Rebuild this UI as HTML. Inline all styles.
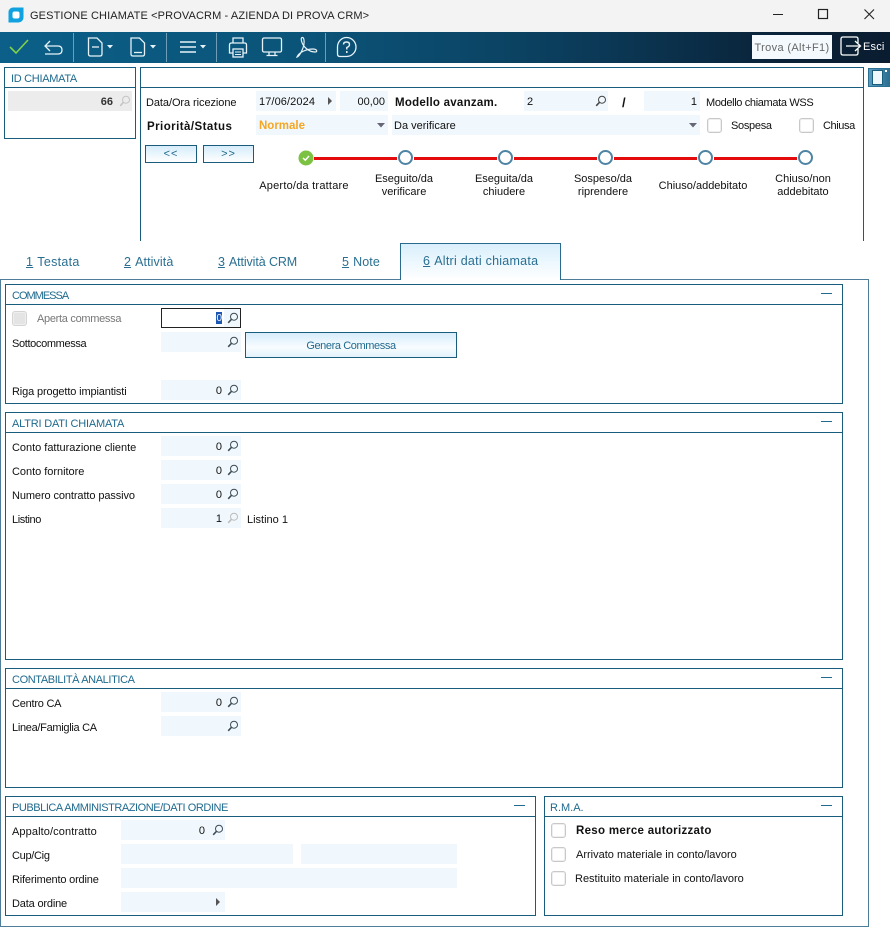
<!DOCTYPE html>
<html><head><meta charset="utf-8">
<style>
html,body{margin:0;padding:0;background:#fff}
#r{position:relative;width:890px;height:927px;overflow:hidden;background:#fff;font-family:"Liberation Sans","DejaVu Sans",sans-serif;font-size:11px;color:#111}
#r div,#r svg{position:absolute;box-sizing:border-box}
.t{white-space:nowrap;line-height:14px;letter-spacing:0}
.b{font-weight:bold}
.f{background:#f1f8fd}
.n{text-align:right;line-height:22px;white-space:nowrap}
.p{border:1px solid #1a5c7c;background:#fff}
.h{color:#1f6a8e;white-space:nowrap;line-height:14px}
.l{background:#1a5c7c;height:1px}
.c{width:15px;height:15px;border:1px solid #c8c8c8;border-radius:3px;background:#fff;box-shadow:inset 0 0 0 1px #efefef}
.m{width:11px;height:1px;background:#1f6a8e}
.st{text-align:center;line-height:13px;white-space:nowrap}
.tab{color:#2a6f92;font-size:12.5px;line-height:16px;white-space:nowrap;letter-spacing:.1px}
.tab u{margin-right:4px}
.nb{border:1px solid #1a5c7c;background:linear-gradient(#d6ecfa,#fff);color:#1f6a8e;text-align:center;line-height:16px;letter-spacing:1px}
.cc{width:15px;height:15px;border-radius:50%;border:2px solid #4d84a3;background:#fff}
.rl{height:3px;background:#e30b0b;top:157px}
</style></head><body>
<div id="r">
<svg width="0" height="0" style="position:absolute"><defs>
<g id="s"><circle cx="7" cy="4.700" r="3.500" fill="none" stroke="currentColor" stroke-width="1"/><path d="M4.500 7.300 L1.200 10.800" stroke="currentColor" stroke-width="1.500" fill="none"/></g>
</defs></svg>

<!-- title bar -->
<div style="left:0;top:0;width:890px;height:32px;background:#f3f3f3"></div>
<svg style="left:8px;top:7px" width="16" height="16"><path d="M5 0.500H15.500V10.500A5 5 0 0 1 10.500 15.500H0.500V5A4.500 4.500 0 0 1 5 0.500Z" fill="#10a2e0"/><rect x="4.500" y="4.500" width="7" height="7" rx="2" fill="#fff"/></svg>
<div class="t" style="left:30px;top:9px;color:#222;letter-spacing:.12px;font-size:11px">GESTIONE CHIAMATE &lt;PROVACRM - AZIENDA DI PROVA CRM&gt;</div>
<svg style="left:770px;top:5px" width="115" height="22" fill="none" stroke="#222" stroke-width="1"><path d="M3 9.500H13"/><rect x="48.500" y="4.500" width="9" height="9" stroke-width="1.200"/><path d="M94.500 4.500L104 14M104 4.500L94.500 14" stroke-width="1.100"/></svg>

<!-- toolbar -->
<div style="left:0;top:32px;width:890px;height:31px;background:linear-gradient(90deg,#0b5f88 0%,#0b5378 35%,#0b4566 55%,#0b3450 72%,#0a2238 88%,#0a1c30 100%)"></div>
<svg style="left:0;top:32px" width="360" height="31" fill="none" stroke="#e6f2f8" stroke-width="1.300">
<path d="M10 15L16 21L28 8" stroke="#7fd24a" stroke-width="1.600"/>
<path d="M50 9L45 14L50 19M45 14H58Q62 14 62 18Q62 22 58 22H45" stroke-width="1.300"/>
<path d="M73.500 1V30M166.500 1V30M216.500 1V30M325.500 1V30" stroke="#6f9db6" stroke-width="1"/>
<path d="M88.500 6H97L102 11V22Q102 24 100 24H90.500Q88.500 24 88.500 22Z"/><path d="M92 15H99"/>
<path d="M131 6H139.500L144.500 11V22Q144.500 24 142.500 24H133Q131 24 131 22Z"/><path d="M134 20.500H142"/>
<path d="M107 13L113 13L110 16.500Z M150 13L156 13L153 16.500Z M200 13L206 13L203 16.500Z" fill="#e6f2f8" stroke="none"/>
<path d="M180 10H196M180 15H196M180 20H196" stroke-width="1.500"/>
<path d="M233 11V6H243V11M233 21H229.500V13Q229.500 11 231.500 11H244.500Q246.500 11 246.500 13V21H243"/><rect x="233" y="17" width="10" height="8"/><path d="M235 20H241M235 22.500H241" stroke-width="1"/>
<rect x="262.500" y="6" width="19" height="14" rx="1.500"/><path d="M269 20V23M275 20V23M266.500 23.500H277.500"/>
<path d="M297 25C300 24 305 14 304 8C303.500 4 300.500 5 301.500 9C303 15 309 20 315 20C318 20 317 17 313 17C307 17 299 20 297 25Z" stroke-width="1.200"/>
<path d="M346.500 5.500A9.500 9.500 0 1 1 346.500 24.500H340Q337.500 24.500 337.500 22V15A9 9.500 0 0 1 346.500 5.500Z"/>
<path d="M343.500 12.500Q343.500 10 346.500 10Q349.500 10 349.500 12.500Q349.500 14.500 346.800 15.500V17.500" stroke-width="1.400"/><path d="M346.800 19V21" stroke-width="1.500"/>
</svg>
<div style="left:752px;top:35px;width:80px;height:24px;background:#f4f9fd;color:#666;line-height:26px;text-align:center;white-space:nowrap;letter-spacing:.35px">Trova (Alt+F1)</div>
<svg style="left:840px;top:36px" width="22" height="22" fill="none" stroke="#fff" stroke-width="1.300"><path d="M18 7V3Q18 1 16 1H3Q1 1 1 3V17Q1 19 3 19H16Q18 19 18 17V13"/><path d="M6 10H20M15 5L20.500 10L15 15"/></svg>
<div class="t" style="left:863px;top:40px;color:#fff;letter-spacing:.2px">Esci</div>

<!-- ID panel -->
<div class="p" style="left:4px;top:67px;width:132px;height:72px"></div>
<div class="l" style="left:4px;top:87px;width:132px"></div>
<div class="h" style="left:11px;top:72px;letter-spacing:-.3px">ID CHIAMATA</div>
<div style="left:8px;top:91px;width:124px;height:20px;background:#ececec"></div>
<div class="b n" style="left:8px;top:91px;width:105px;color:#333">66</div>
<svg style="left:119px;top:95px;color:#c4c4c4" width="12" height="12"><use href="#s"/></svg>

<!-- main header panel -->
<div style="left:140px;top:67px;width:724px;height:174px;border:1px solid #1a5c7c;border-bottom:0"></div>
<div class="l" style="left:140px;top:87px;width:724px"></div>
<div style="left:868px;top:68px;width:22px;height:19px;border:1px solid #2b6f92;background:linear-gradient(90deg,#5a9cc0,#2b6f92)"></div>
<div style="left:872px;top:70px;width:11px;height:15px;background:#eef7fc;border:1px solid #1a5c7c"></div>
<div style="left:885px;top:70px;width:2px;height:2px;background:#fff"></div>

<div class="t" style="left:146px;top:96px;letter-spacing:-.07px">Data/Ora ricezione</div>
<div class="f" style="left:256px;top:91px;width:80px;height:20px"></div>
<div class="t" style="left:259px;top:95px;letter-spacing:.1px">17/06/2024</div>
<svg style="left:327px;top:97px" width="6" height="8"><path d="M1 0L5 4L1 8Z" fill="#555"/></svg>
<div class="f n" style="left:340px;top:91px;width:48px;height:20px;padding-right:3px">00,00</div>
<div class="t b" style="left:395px;top:96px;font-size:11.500px;letter-spacing:.25px">Modello avanzam.</div>
<div class="f" style="left:524px;top:91px;width:84px;height:20px"></div>
<div class="t" style="left:527px;top:95px">2</div>
<svg style="left:595px;top:95px;color:#444" width="12" height="12"><use href="#s"/></svg>
<div class="t b" style="left:622px;top:96px;font-size:13px">/</div>
<div class="f n" style="left:644px;top:91px;width:56px;height:20px;padding-right:3px">1</div>
<div class="t" style="left:706px;top:96px;letter-spacing:-.35px">Modello chiamata WSS</div>

<div class="t b" style="left:147px;top:120px;font-size:11.500px;letter-spacing:.45px">Priorità/Status</div>
<div class="f" style="left:256px;top:115px;width:132px;height:20px"></div>
<div class="t b" style="left:259px;top:119px;color:#f5a623;font-size:11.500px">Normale</div>
<svg style="left:377px;top:123px" width="8" height="5"><path d="M0 0H8L4 4.500Z" fill="#667"/></svg>
<div class="f" style="left:392px;top:115px;width:308px;height:20px"></div>
<div class="t" style="left:394px;top:119px">Da verificare</div>
<svg style="left:689px;top:123px" width="8" height="5"><path d="M0 0H8L4 4.500Z" fill="#667"/></svg>
<div class="c" style="left:707px;top:118px"></div>
<div class="t" style="left:731px;top:119px;letter-spacing:-.3px">Sospesa</div>
<div class="c" style="left:799px;top:118px"></div>
<div class="t" style="left:823px;top:119px;letter-spacing:-.4px">Chiusa</div>

<div class="nb" style="left:145px;top:145px;width:52px;height:18px">&lt;&lt;</div>
<div class="nb" style="left:203px;top:145px;width:51px;height:18px">&gt;&gt;</div>

<!-- stepper -->
<div class="rl" style="left:314px;width:83px"></div>
<div class="rl" style="left:414px;width:83px"></div>
<div class="rl" style="left:514px;width:83px"></div>
<div class="rl" style="left:614px;width:83px"></div>
<div class="rl" style="left:714px;width:83px"></div>
<svg style="left:298px;top:150px" width="16" height="16"><circle cx="8" cy="8" r="7.500" fill="#7cc242"/><path d="M5 8L7.300 10.200L11 6" stroke="#fff" stroke-width="1.500" fill="none"/></svg>
<div class="cc" style="left:398px;top:150px"></div>
<div class="cc" style="left:498px;top:150px"></div>
<div class="cc" style="left:598px;top:150px"></div>
<div class="cc" style="left:698px;top:150px"></div>
<div class="cc" style="left:798px;top:150px"></div>
<div class="st" style="left:244px;top:180px;width:120px;letter-spacing:.22px">Aperto/da trattare</div>
<div class="st" style="left:344px;top:173px;width:120px">Eseguito/da<br>verificare</div>
<div class="st" style="left:444px;top:173px;width:120px">Eseguita/da<br>chiudere</div>
<div class="st" style="left:543px;top:173px;width:120px">Sospeso/da<br>riprendere</div>
<div class="st" style="left:643px;top:180px;width:120px">Chiuso/addebitato</div>
<div class="st" style="left:743px;top:173px;width:120px">Chiuso/non<br>addebitato</div>

<!-- tabs -->
<div style="left:0;top:279px;width:869px;height:648px;border:1px solid #4d7d99;"></div>
<div class="tab" style="left:26px;top:254px;letter-spacing:.3px"><u>1</u>Testata</div>
<div class="tab" style="left:124px;top:254px"><u>2</u>Attività</div>
<div class="tab" style="left:218px;top:254px;letter-spacing:-.1px"><u>3</u>Attività CRM</div>
<div class="tab" style="left:342px;top:254px"><u>5</u>Note</div>
<div style="left:400px;top:243px;width:161px;height:37px;border:1px solid #2a6a8c;border-bottom:0;background:linear-gradient(#d9effc,#fff)"></div>
<div class="tab" style="left:423px;top:253px;letter-spacing:.25px"><u>6</u>Altri dati chiamata</div>

<!-- COMMESSA -->
<div class="p" style="left:5px;top:284px;width:838px;height:120px"></div>
<div class="l" style="left:5px;top:304px;width:838px"></div>
<div class="h" style="left:12px;top:289px;letter-spacing:-1px">COMMESSA</div>
<div class="m" style="left:821px;top:293px"></div>
<div class="c" style="left:12px;top:311px;background:#e4e4e4;border-color:#d4d4d4"></div>
<div class="t" style="left:37px;top:312px;color:#777;letter-spacing:-.3px">Aperta commessa</div>
<div style="left:161px;top:308px;width:80px;height:20px;border:1px solid #222;background:#fff"></div>
<div style="left:216px;top:312px;width:6px;height:12px;background:#1c57b5"></div>
<div class="n" style="left:161px;top:308px;width:61px;color:#fff;font-size:10px">0</div>
<div style="left:224px;top:309px;width:16px;height:18px;background:#f1f8fd"></div>
<svg style="left:227px;top:312px;color:#3a4a55" width="12" height="12"><use href="#s"/></svg>

<div class="t" style="left:12px;top:337px;letter-spacing:-.35px">Sottocommessa</div>
<div class="f" style="left:161px;top:332px;width:80px;height:20px"></div>
<svg style="left:227px;top:336px;color:#3a4a55" width="12" height="12"><use href="#s"/></svg>
<div style="left:245px;top:332px;width:212px;height:26px;border:1px solid #1a5c7c;background:linear-gradient(#d6ecfa,#f8fcff 60%,#e2f2fb);color:#1f6a8e;text-align:center;line-height:26px;letter-spacing:-.4px">Genera Commessa</div>

<div class="t" style="left:12px;top:385px;letter-spacing:-.14px">Riga progetto impiantisti</div>
<div class="f n" style="left:161px;top:380px;width:80px;height:20px;padding-right:19px">0</div>
<svg style="left:227px;top:384px;color:#3a4a55" width="12" height="12"><use href="#s"/></svg>

<!-- ALTRI DATI -->
<div class="p" style="left:5px;top:412px;width:838px;height:248px"></div>
<div class="l" style="left:5px;top:432px;width:838px"></div>
<div class="h" style="left:12px;top:417px;letter-spacing:-.2px">ALTRI DATI CHIAMATA</div>
<div class="m" style="left:821px;top:421px"></div>

<div class="t" style="left:12px;top:441px;letter-spacing:-.02px">Conto fatturazione cliente</div>
<div class="f n" style="left:161px;top:436px;width:80px;height:20px;padding-right:19px">0</div>
<svg style="left:227px;top:440px;color:#3a4a55" width="12" height="12"><use href="#s"/></svg>
<div class="t" style="left:12px;top:465px;letter-spacing:-.03px">Conto fornitore</div>
<div class="f n" style="left:161px;top:460px;width:80px;height:20px;padding-right:19px">0</div>
<svg style="left:227px;top:464px;color:#3a4a55" width="12" height="12"><use href="#s"/></svg>
<div class="t" style="left:12px;top:489px;letter-spacing:-.1px">Numero contratto passivo</div>
<div class="f n" style="left:161px;top:484px;width:80px;height:20px;padding-right:19px">0</div>
<svg style="left:227px;top:488px;color:#3a4a55" width="12" height="12"><use href="#s"/></svg>
<div class="t" style="left:12px;top:513px;letter-spacing:-.4px">Listino</div>
<div class="f n" style="left:161px;top:508px;width:80px;height:20px;padding-right:19px">1</div>
<svg style="left:227px;top:512px;color:#bbb" width="12" height="12"><use href="#s"/></svg>
<div class="t" style="left:247px;top:513px">Listino 1</div>

<!-- CONTABILITA -->
<div class="p" style="left:5px;top:668px;width:838px;height:120px"></div>
<div class="l" style="left:5px;top:688px;width:838px"></div>
<div class="h" style="left:12px;top:673px;letter-spacing:-.38px">CONTABILITÀ ANALITICA</div>
<div class="m" style="left:821px;top:677px"></div>
<div class="t" style="left:12px;top:697px;letter-spacing:-.23px">Centro CA</div>
<div class="f n" style="left:161px;top:692px;width:80px;height:20px;padding-right:19px">0</div>
<svg style="left:227px;top:696px;color:#3a4a55" width="12" height="12"><use href="#s"/></svg>
<div class="t" style="left:12px;top:721px;letter-spacing:-.3px">Linea/Famiglia CA</div>
<div class="f" style="left:161px;top:716px;width:80px;height:20px"></div>
<svg style="left:227px;top:720px;color:#3a4a55" width="12" height="12"><use href="#s"/></svg>

<!-- PA -->
<div class="p" style="left:5px;top:796px;width:531px;height:120px"></div>
<div class="l" style="left:5px;top:816px;width:531px"></div>
<div class="h" style="left:12px;top:801px;letter-spacing:-.45px">PUBBLICA AMMINISTRAZIONE/DATI ORDINE</div>
<div class="m" style="left:514px;top:805px"></div>
<div class="t" style="left:12px;top:825px;letter-spacing:.1px">Appalto/contratto</div>
<div class="f n" style="left:121px;top:820px;width:104px;height:20px;padding-right:20px">0</div>
<svg style="left:212px;top:824px;color:#3a4a55" width="12" height="12"><use href="#s"/></svg>
<div class="t" style="left:12px;top:849px;letter-spacing:-.3px">Cup/Cig</div>
<div class="f" style="left:121px;top:844px;width:172px;height:20px"></div>
<div class="f" style="left:301px;top:844px;width:156px;height:20px"></div>
<div class="t" style="left:12px;top:873px;letter-spacing:-.18px">Riferimento ordine</div>
<div class="f" style="left:121px;top:868px;width:336px;height:20px"></div>
<div class="t" style="left:12px;top:897px;letter-spacing:-.17px">Data ordine</div>
<div class="f" style="left:121px;top:892px;width:104px;height:20px"></div>
<svg style="left:215px;top:898px" width="6" height="8"><path d="M1 0L5 4L1 8Z" fill="#555"/></svg>

<!-- RMA -->
<div class="p" style="left:544px;top:796px;width:299px;height:120px"></div>
<div class="l" style="left:544px;top:816px;width:299px"></div>
<div class="h" style="left:550px;top:801px">R.M.A.</div>
<div class="m" style="left:821px;top:805px"></div>
<div class="c" style="left:551px;top:823px"></div>
<div class="t b" style="left:576px;top:824px;font-size:11.500px;letter-spacing:.3px">Reso merce autorizzato</div>
<div class="c" style="left:551px;top:847px"></div>
<div class="t" style="left:576px;top:848px">Arrivato materiale in conto/lavoro</div>
<div class="c" style="left:551px;top:871px"></div>
<div class="t" style="left:575px;top:872px">Restituito materiale in conto/lavoro</div>
</div>
</body></html>
